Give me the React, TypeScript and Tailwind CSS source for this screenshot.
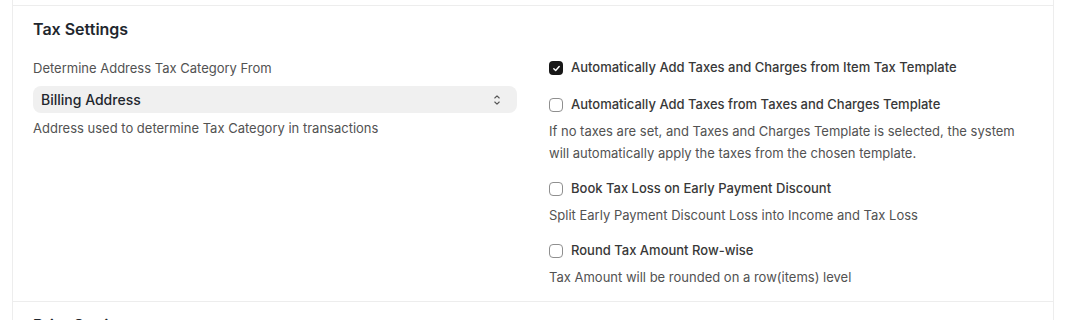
import React from "react";

interface CheckField {
  label: string;
  checked: boolean;
  description?: string[];
}

const checkFields: CheckField[] = [
  { label: "Automatically Add Taxes and Charges from Item Tax Template", checked: true },
  {
    label: "Automatically Add Taxes from Taxes and Charges Template",
    checked: false,
    description: [
      "If no taxes are set, and Taxes and Charges Template is selected, the system",
      "will automatically apply the taxes from the chosen template.",
    ],
  },
  {
    label: "Book Tax Loss on Early Payment Discount",
    checked: false,
    description: ["Split Early Payment Discount Loss into Income and Tax Loss"],
  },
  {
    label: "Round Tax Amount Row-wise",
    checked: false,
    description: ["Tax Amount will be rounded on a row(items) level"],
  },
];

function Checkbox({ checked }: { checked: boolean }) {
  if (checked) {
    return (
      <span className="flex h-[14px] w-[14px] shrink-0 items-center justify-center rounded-[4px] bg-[#171717]">
        <svg width="9" height="9" viewBox="0 0 10 10" fill="none">
          <path d="M2 5.2 4.1 7.2 8 2.8" stroke="white" strokeWidth="1.6" strokeLinecap="round" strokeLinejoin="round" />
        </svg>
      </span>
    );
  }
  return <span className="h-[14px] w-[14px] shrink-0 rounded-[4px] border border-[#8f8f8f] bg-white" />;
}

export default function App() {
  return (
    <div className="h-[320px] w-full overflow-hidden bg-white font-['Inter',sans-serif] antialiased">
      <div className="mx-3 border-x border-[#ededed]">
        {/* spacer above the section divider */}
        <div className="h-[5px]" />

        {/* Tax Settings section */}
        <section className="border-t border-[#ededed] px-5 pt-[13px] pb-[13px]">
          <h2 className="text-[16px] leading-[20px] font-semibold text-[#1f272e]">Tax Settings</h2>

          <div className="mt-[20px] grid grid-cols-2 gap-8">
            {/* Left column */}
            <div>
              <label className="block text-[13px] leading-[18px] text-[#525252]">
                Determine Address Tax Category From
              </label>
              <div className="mt-[9px] flex h-[27px] items-center justify-between rounded-lg bg-[#f0f0f0] px-2">
                <span className="text-[14px] font-medium text-[#1f272e]">Billing Address</span>
                <svg width="10" height="14" viewBox="0 0 10 14" fill="none" className="mr-[7px]">
                  <path d="M2.8 5 5 2.8 7.2 5" stroke="#555" strokeWidth="1.1" strokeLinecap="round" strokeLinejoin="round" />
                  <path d="M2.8 9 5 11.2 7.2 9" stroke="#555" strokeWidth="1.1" strokeLinecap="round" strokeLinejoin="round" />
                </svg>
              </div>
              <p className="mt-[6px] text-[13px] leading-[18px] text-[#525252]">
                Address used to determine Tax Category in transactions
              </p>
            </div>

            {/* Right column */}
            <div className="flex flex-col gap-[16px]">
              {checkFields.map((field, index) => (
                <div key={index} className={field.description ? "" : "mb-[3px]"}>
                  <div className="flex h-[18px] items-center gap-2">
                    <Checkbox checked={field.checked} />
                    <span className="text-[13px] font-medium text-[#383838]">{field.label}</span>
                  </div>
                  {field.description && (
                    <p className="mt-[6px] text-[13px] leading-[22px] text-[#525252]">
                      {field.description.map((line, i) => (
                        <span key={i} className="block">
                          {line}
                        </span>
                      ))}
                    </p>
                  )}
                </div>
              ))}
            </div>
          </div>
        </section>

        {/* Next section, cut off at the bottom */}
        <section className="border-t border-[#ededed] px-5 pt-[13px]">
          <h2 className="text-[16px] leading-[20px] font-semibold text-[#1f272e]">Print Settings</h2>
        </section>
      </div>
    </div>
  );
}
